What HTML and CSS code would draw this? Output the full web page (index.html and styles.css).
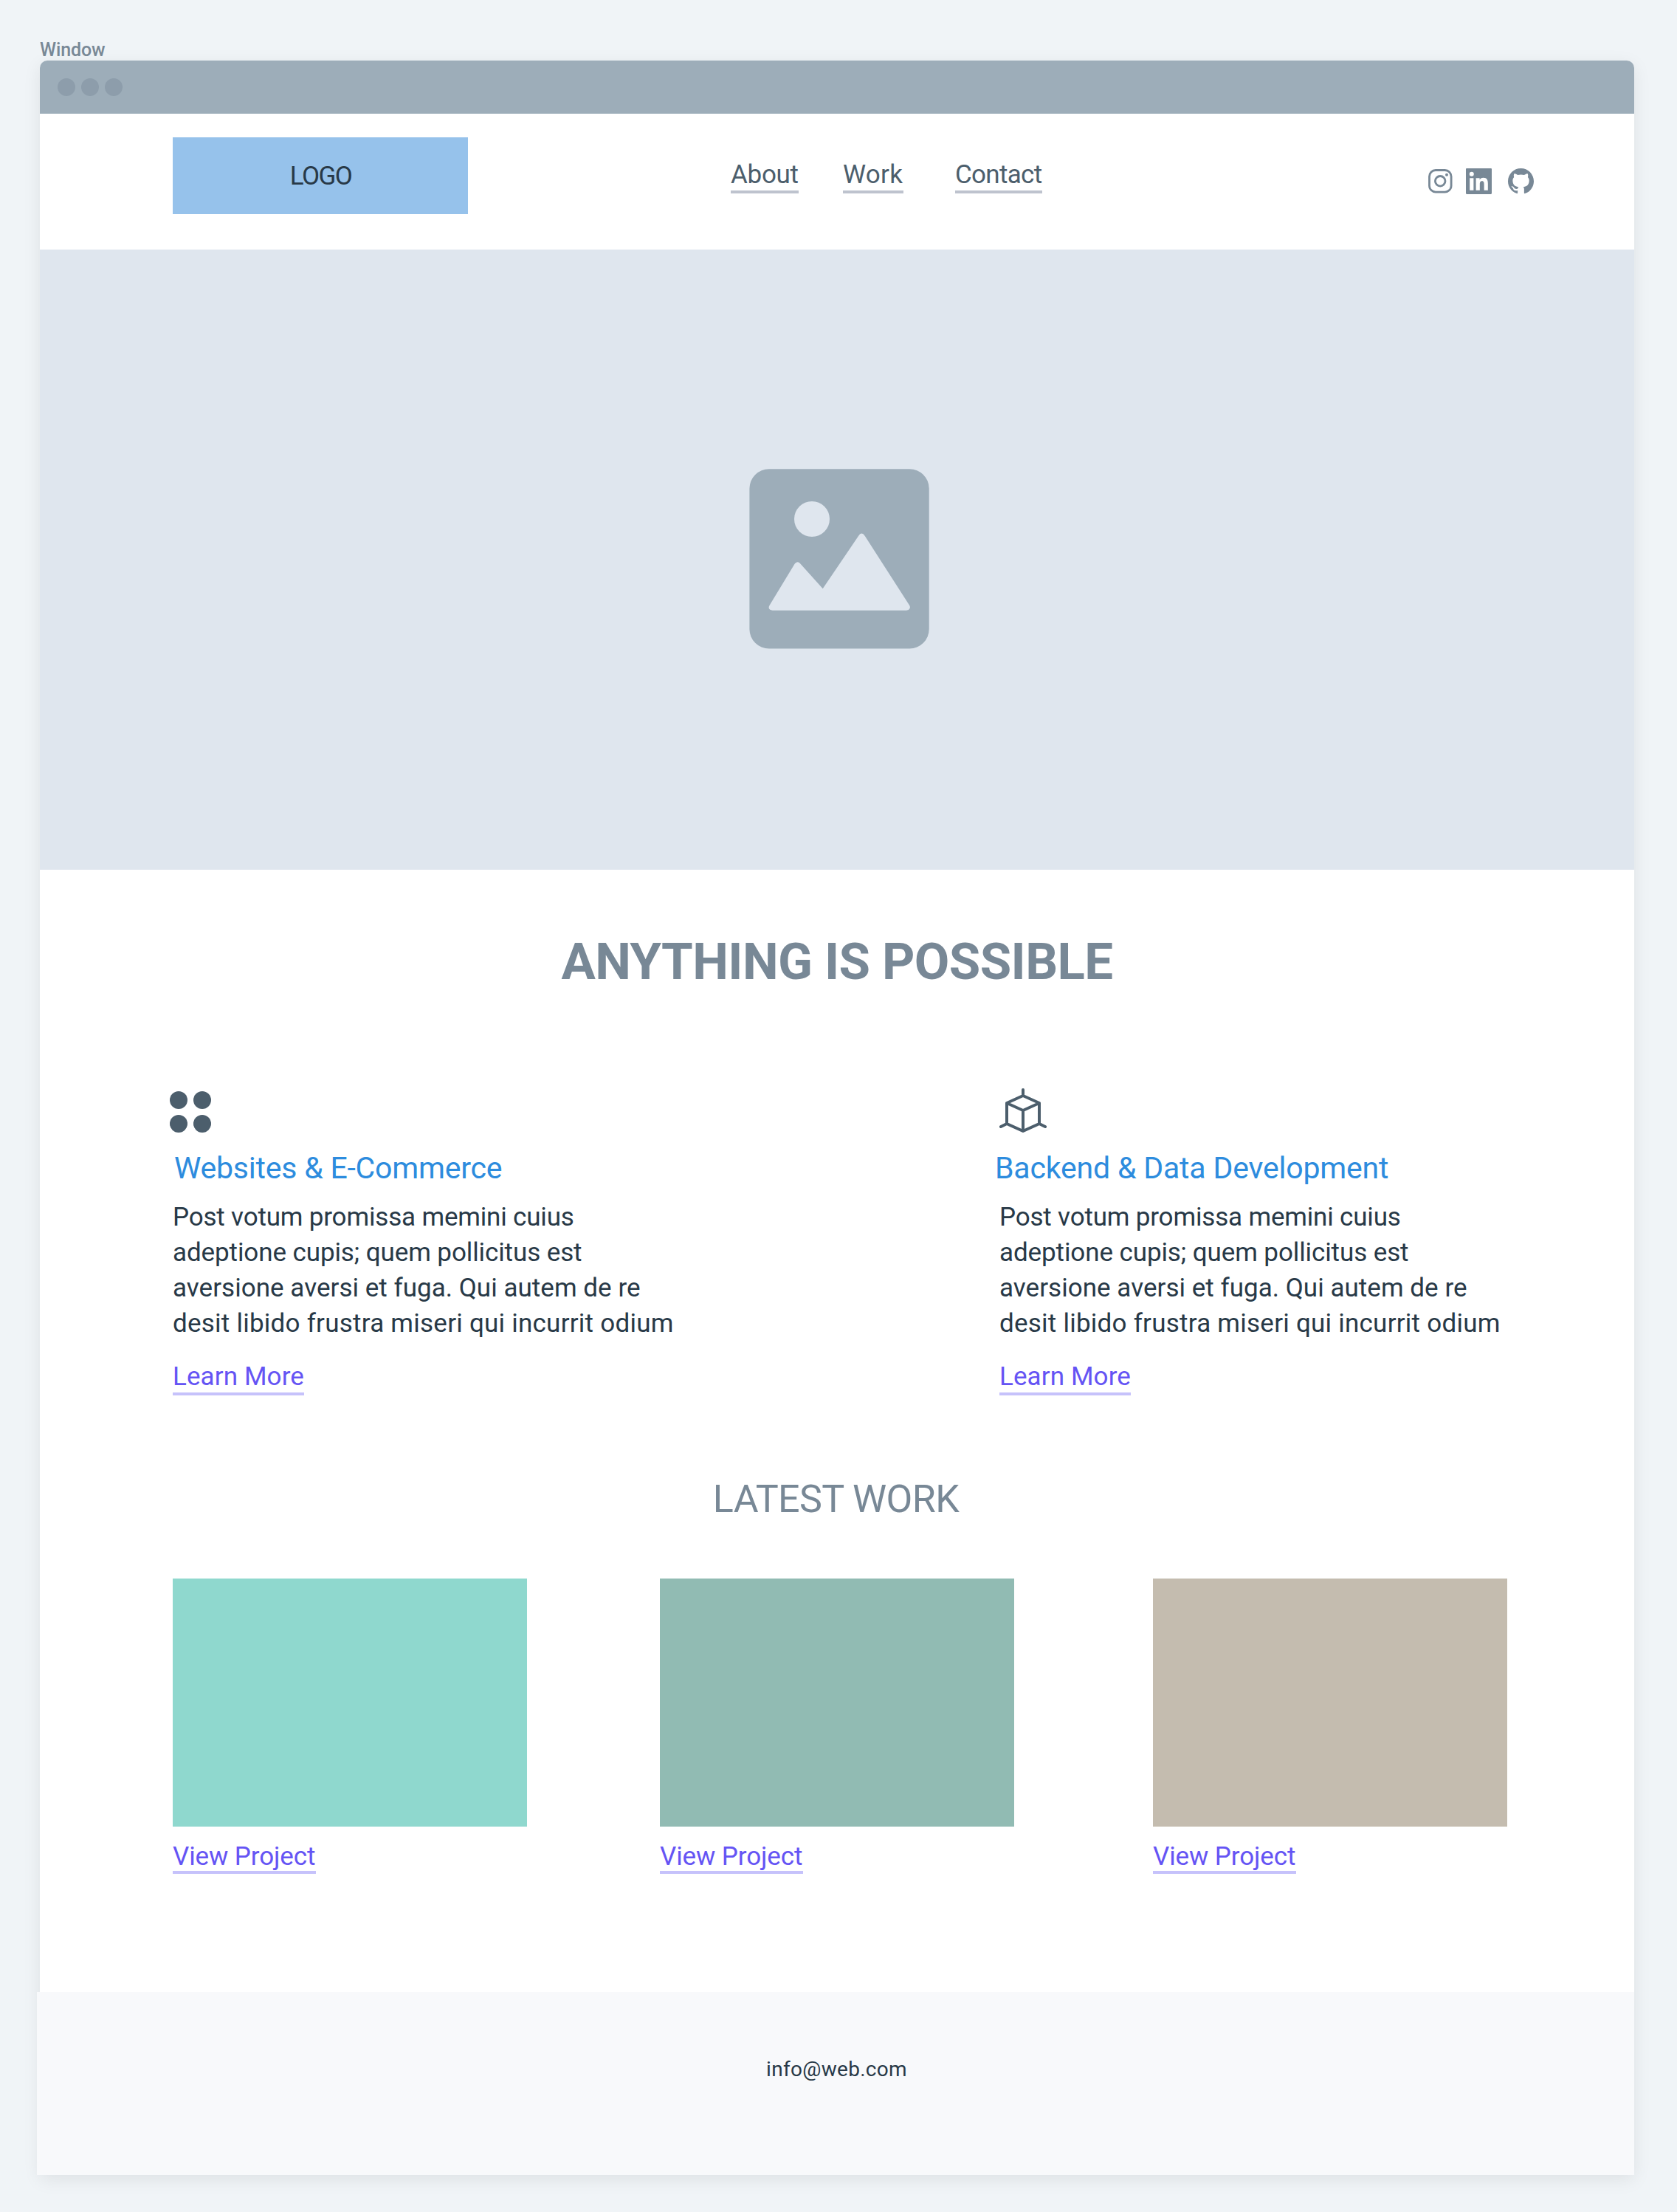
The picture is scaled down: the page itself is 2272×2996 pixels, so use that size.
FILE: index.html
```
<!DOCTYPE html>
<html lang="en">
<head>
<meta charset="utf-8">
<title>Window</title>
<link rel="stylesheet" href="styles.css">
</head>
<body>
<div class="frame">
  <div class="frame-label">Window</div>
  <div class="window">
    <div class="titlebar"><i class="dot"></i><i class="dot"></i><i class="dot"></i></div>
    <header class="header">
      <div class="logo">LOGO</div>
      <nav class="nav">
        <a class="link link-about">About</a>
        <a class="link link-work">Work</a>
        <a class="link link-contact">Contact</a>
      </nav>
      <div class="social">
        <svg class="instagram" viewBox="0 0 33 33"><rect x="1.5" y="1.5" width="29.6" height="29.6" rx="8.5" fill="none" stroke="currentColor" stroke-width="2.8"/><circle cx="16.2" cy="16.3" r="6.8" fill="none" stroke="currentColor" stroke-width="2.8"/><circle cx="25" cy="7.8" r="2"/></svg>
        <svg class="linkedin" viewBox="0 0 24 24"><path d="M20.447 20.452h-3.554v-5.569c0-1.328-.027-3.037-1.852-3.037-1.853 0-2.136 1.445-2.136 2.939v5.667H9.351V9h3.414v1.561h.046c.477-.9 1.637-1.85 3.37-1.85 3.601 0 4.267 2.37 4.267 5.455v6.286zM5.337 7.433a2.062 2.062 0 01-2.063-2.065 2.064 2.064 0 112.063 2.065zm1.782 13.019H3.555V9h3.564v11.452zM23.2 0H.8C.35 0 0 .35 0 .8v22.4c0 .45.35.8.8.8h22.4c.45 0 .8-.35.8-.8V.8c0-.45-.35-.8-.8-.8z"/></svg>
        <svg class="github" viewBox="0 0 16 16"><path d="M8 0C3.58 0 0 3.58 0 8c0 3.54 2.29 6.53 5.47 7.59.4.07.55-.17.55-.38 0-.19-.01-.82-.01-1.49-2.01.37-2.53-.49-2.69-.94-.09-.23-.48-.94-.82-1.13-.28-.15-.68-.52-.01-.53.63-.01 1.08.58 1.23.82.72 1.21 1.87.87 2.33.66.07-.52.28-.87.51-1.07-1.78-.2-3.64-.89-3.64-3.95 0-.87.31-1.59.82-2.15-.08-.2-.36-1.02.08-2.12 0 0 .67-.21 2.2.82.64-.18 1.32-.27 2-.27.68 0 1.36.09 2 .27 1.53-1.04 2.2-.82 2.2-.82.44 1.1.16 1.92.08 2.12.51.56.82 1.27.82 2.15 0 3.07-1.87 3.75-3.65 3.95.29.25.54.73.54 1.48 0 1.07-.01 1.93-.01 2.2 0 .21.15.46.55.38A8.01 8.01 0 0016 8c0-4.42-3.58-8-8-8z"/></svg>
      </div>
    </header>
    <div class="hero">
      <svg class="picture" viewBox="0 0 244 244"><rect x=".4" y=".2" width="243.3" height="243.4" rx="26.5" fill="#9dadb9"/><circle cx="85" cy="68" r="24" fill="#dfe6ee"/><path fill="#dfe6ee" d="M31.5 191.7Q27.5 191.3 26.6 188.5Q26.5 186.7 27.5 185L61.6 128.8Q65.3 123.8 69.3 128.6L99.7 162.3L148 91Q152.3 84.2 156.8 91L217.2 185Q218.3 187 217.6 189Q216.4 191.6 213 191.7Z"/></svg>
    </div>
    <main>
      <h1 class="headline">ANYTHING IS POSSIBLE</h1>
      <section class="features">
        <article class="feature">
          <svg class="feature-icon four-dots" viewBox="0 0 56 60"><circle cx="12" cy="16" r="12"/><circle cx="44" cy="16" r="12"/><circle cx="12" cy="48" r="12"/><circle cx="44" cy="48" r="12"/></svg>
          <h2 class="feature-title websites">Websites &amp; E-Commerce</h2>
          <p class="copy"><span class="l1">Post votum promissa memini cuius</span><span class="l2">adeptione cupis; quem pollicitus est</span><span class="l3">aversione aversi et fuga. Qui autem de re</span><span class="l4">desit libido frustra miseri qui incurrit odium</span></p>
          <a class="link link-more">Learn More</a>
        </article>
        <article class="feature">
          <svg class="feature-icon cube" viewBox="0 0 64 60"><path d="M32 2V10M32 10L54 20V48L32 58L10 48V20ZM10 20L32 30L54 20M32 30V58M10 48L2 52M54 48L62 52"/></svg>
          <h2 class="feature-title backend">Backend &amp; Data Development</h2>
          <p class="copy"><span class="l1">Post votum promissa memini cuius</span><span class="l2">adeptione cupis; quem pollicitus est</span><span class="l3">aversione aversi et fuga. Qui autem de re</span><span class="l4">desit libido frustra miseri qui incurrit odium</span></p>
          <a class="link link-more">Learn More</a>
        </article>
      </section>
      <h2 class="subhead">LATEST WORK</h2>
      <section class="projects">
        <article class="project"><div class="thumb teal"></div><a class="link link-view">View Project</a></article>
        <article class="project"><div class="thumb green"></div><a class="link link-view">View Project</a></article>
        <article class="project"><div class="thumb tan"></div><a class="link link-view">View Project</a></article>
      </section>
    </main>
    <footer class="footer">info@web.com</footer>
  </div>
</div>
</body>
</html>
```
FILE: styles.css
```
* { box-sizing: border-box; }
body { margin: 0; background: #f0f4f7; color: #283947; font-family: Roboto, "Liberation Sans", sans-serif; font-size: 35px; line-height: 48px; }
h1, h2, p { margin: 0; font-weight: 400; }
svg { display: block; flex: none; fill: currentColor; }

.frame { width: 2272px; height: 2996px; padding: 52px 58px 0 54px; }
.frame-label { height: 30px; line-height: 32px; font-size: 25px; letter-spacing: -0.1px; color: #788896; font-weight: 500; }
.window { width: 2160px; height: 2864px; background: #fff; border-radius: 10px 10px 0 0; box-shadow: 0 6px 24px rgba(0, 0, 0, 0.08); }
.titlebar { display: flex; align-items: center; gap: 8px; height: 72px; padding-left: 24px; background: #9dadb9; border-radius: 10px 10px 0 0; }
.dot { width: 24px; height: 24px; border-radius: 50%; background: #8d9dab; }

.header { display: flex; height: 184px; padding: 32px 0 0 180px; }
.logo { display: flex; align-items: center; justify-content: center; width: 400px; height: 104px; padding: 2px 0 0 1px; background: #96c2eb; letter-spacing: -1.6px; }
.nav { display: flex; margin: 28px 0 0 356px; color: #4c5e6c; }
.link { display: block; height: 48px; line-height: 46px; border-bottom: 4px solid #c6c2fb; color: #6554f4; white-space: nowrap; }
.nav .link { border-color: #bec3ce; color: #4c5e6c; }
.link-about { width: 92px; letter-spacing: -0.3px; }
.link-work { width: 82px; margin-left: 60px; letter-spacing: 0.3px; }
.link-contact { width: 118px; margin-left: 70px; letter-spacing: -0.7px; }
.social { display: flex; margin: 42px 0 0 523px; color: #788896; }
.instagram { width: 33px; height: 33px; margin-top: 1px; }
.linkedin { width: 35px; height: 35px; margin-left: 18px; }
.github { width: 35px; height: 35px; margin-left: 22px; }

.hero { height: 840px; padding: 297px 0 0 961px; background: #dfe6ee; }
.picture { width: 244px; height: 244px; }

.headline { padding-top: 83px; height: 166px; line-height: 84px; font-size: 69px; font-weight: 700; text-align: center; color: #788896; letter-spacing: -0.6px; }
.features { display: grid; grid-template-columns: 1120px 800px; margin-top: 130px; padding-left: 180px; }
.feature-icon { height: 60px; color: #4c5e6c; }
.four-dots { width: 56px; margin-left: -4px; }
.cube { width: 64px; fill: none; stroke: currentColor; stroke-width: 4; stroke-linecap: round; stroke-linejoin: round; }
.feature-title { margin-top: 24px; font-size: 41px; color: #2d8cde; white-space: nowrap; }
.websites { margin-left: 2px; letter-spacing: -0.22px; }
.backend { margin-left: -6px; letter-spacing: -0.18px; }
.copy { margin: 19px 0 25px; }
.copy span { display: block; white-space: nowrap; }
.l1 { letter-spacing: -0.18px; }
.l2 { letter-spacing: -0.1px; }
.l3 { letter-spacing: 0.03px; }
.l4 { letter-spacing: 0.24px; }
.link-more { width: 178px; letter-spacing: 0.1px; }

.subhead { margin-top: 109px; line-height: 64px; font-size: 52px; text-align: center; color: #788896; letter-spacing: -0.6px; padding-right: 3px; }
.projects { display: grid; grid-template-columns: 660px 668px 480px; margin-top: 75px; padding-left: 180px; }
.thumb { width: 480px; height: 336px; }
.teal { background: #8fd8ce; }
.green { background: #91bbb3; }
.tan { background: #c4bcaf; }
.link-view { width: 194px; height: 44px; margin-top: 20px; line-height: 42px; letter-spacing: -0.1px; }

.footer { width: 2164px; height: 248px; margin: 160px 0 0 -4px; padding: 85px 0 0 3px; background: #f8f9fb; text-align: center; font-size: 28px; line-height: 40px; letter-spacing: 0.3px; }
```
